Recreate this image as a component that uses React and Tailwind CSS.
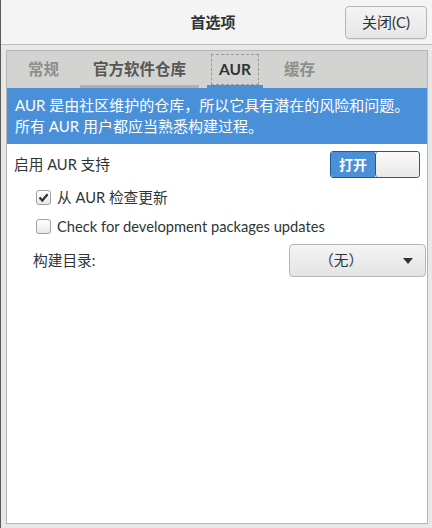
import React from 'react';

const tabs = [
  { label: '常规', state: 'idle' },
  { label: '官方软件仓库', state: 'hover' },
  { label: 'AUR', state: 'active' },
  { label: '缓存', state: 'idle' },
];

const Check = ({ checked }) => (
  <span className="flex h-[15px] w-[15px] items-center justify-center rounded-[3px] border border-[#a1a1a1] bg-gradient-to-b from-white to-[#e8e8e8]">
    {checked && (
      <svg width="11" height="11" viewBox="0 0 11 11">
        <path d="M1.5 5.5 L4.3 8.5 L9.6 2.2" fill="none" stroke="#2e3436" strokeWidth="2.2" />
      </svg>
    )}
  </span>
);

const App = () => {
  return (
    <div
      className="flex h-[528px] w-[432px] flex-col border-l border-[#5a5a5a] bg-[#e8e8e8] text-[14.7px] text-[#2e3436]"
      style={{ fontFamily: 'Lato, "Noto Sans CJK SC", sans-serif' }}
    >
      {/* header bar */}
      <div className="flex h-[45px] shrink-0 items-center border-b border-[#bdbdbd] bg-[#f4f4f4] pr-[5px]">
        <div className="flex-1 pl-[80px] text-center text-[15px] font-bold">首选项</div>
        <button className="h-[33px] w-[82px] rounded-[4px] border border-[#b6b6b3] bg-gradient-to-b from-[#f4f4f4] to-[#e6e6e6] text-[15px] text-[#2e3436] shadow-[0_1px_0_rgba(0,0,0,0.06)]">
          关闭(C)
        </button>
      </div>

      {/* notebook */}
      <div className="mb-[4px] ml-[5px] mr-[4px] mt-[5px] flex flex-1 flex-col border border-[#b6b6b3] bg-white">
        <div className="flex h-[37px] shrink-0 items-stretch gap-[8px] bg-[#d3d3d1] pl-[8px] text-[15.5px]">
          {tabs.map((t) => (
            <div
              key={t.label}
              className={
                t.state === 'active'
                  ? 'flex items-center border-b-[3px] border-[#4a90d9] px-[4px] pt-[3px]'
                  : t.state === 'hover'
                  ? 'flex items-center border-b-[3px] border-[#b0b0ae] px-[13px] pt-[3px]'
                  : 'flex items-center border-b-[3px] border-transparent px-[13px] pt-[3px]'
              }
            >
              {t.state === 'active' ? (
                <span className="border border-dashed border-[#9a9a9a] px-[7px] py-[3px] font-bold text-[#2e3436]">
                  {t.label}
                </span>
              ) : (
                <span className={t.state === 'hover' ? 'font-bold text-[#555753]' : 'font-bold text-[#8d8f8a]'}>
                  {t.label}
                </span>
              )}
            </div>
          ))}
        </div>

        <div className="shrink-0 bg-[#4a90d9] px-[8px] py-[7px] text-[15px] leading-[21px] text-white">
          <div>AUR 是由社区维护的仓库，所以它具有潜在的风险和问题。</div>
          <div>所有 AUR 用户都应当熟悉构建过程。</div>
        </div>

        <div className="flex flex-col pl-[7px] pr-[7px] pt-[7px]">
          <div className="flex h-[27px] items-center justify-between">
            <span>启用 AUR 支持</span>
            <div className="flex h-[27px] w-[90px] overflow-hidden rounded-[3px] border border-[#1f5a95]">
              <div className="flex w-[44px] items-center justify-center bg-[#4a90d9] text-[14px] font-bold text-white">
                打开
              </div>
              <div className="flex-1 rounded-[3px] border-l border-[#1f5a95] bg-gradient-to-b from-[#fafafa] to-[#e8e8e8]" />
            </div>
          </div>

          <div className="mt-[8px] flex h-[22px] items-center gap-[6px] pl-[22px]">
            <Check checked />
            <span>从 AUR 检查更新</span>
          </div>

          <div className="mt-[7px] flex h-[22px] items-center gap-[6px] pl-[22px]">
            <Check />
            <span>Check for development packages updates</span>
          </div>

          <div className="mr-[-6px] mt-[7px] flex items-center justify-between pl-[19px]">
            <span>构建目录:</span>
            <div className="flex h-[33px] w-[137px] items-center rounded-[4px] border border-[#b6b6b3] bg-gradient-to-b from-[#f4f4f4] to-[#e4e4e4] pl-[29px] pr-[12px]">
              <span className="flex-1">（无）</span>
              <svg width="10" height="6" viewBox="0 0 10 6">
                <path d="M0 0 L10 0 L5 6 Z" fill="#2e3436" />
              </svg>
            </div>
          </div>
        </div>
      </div>
    </div>
  );
};

export default App;
